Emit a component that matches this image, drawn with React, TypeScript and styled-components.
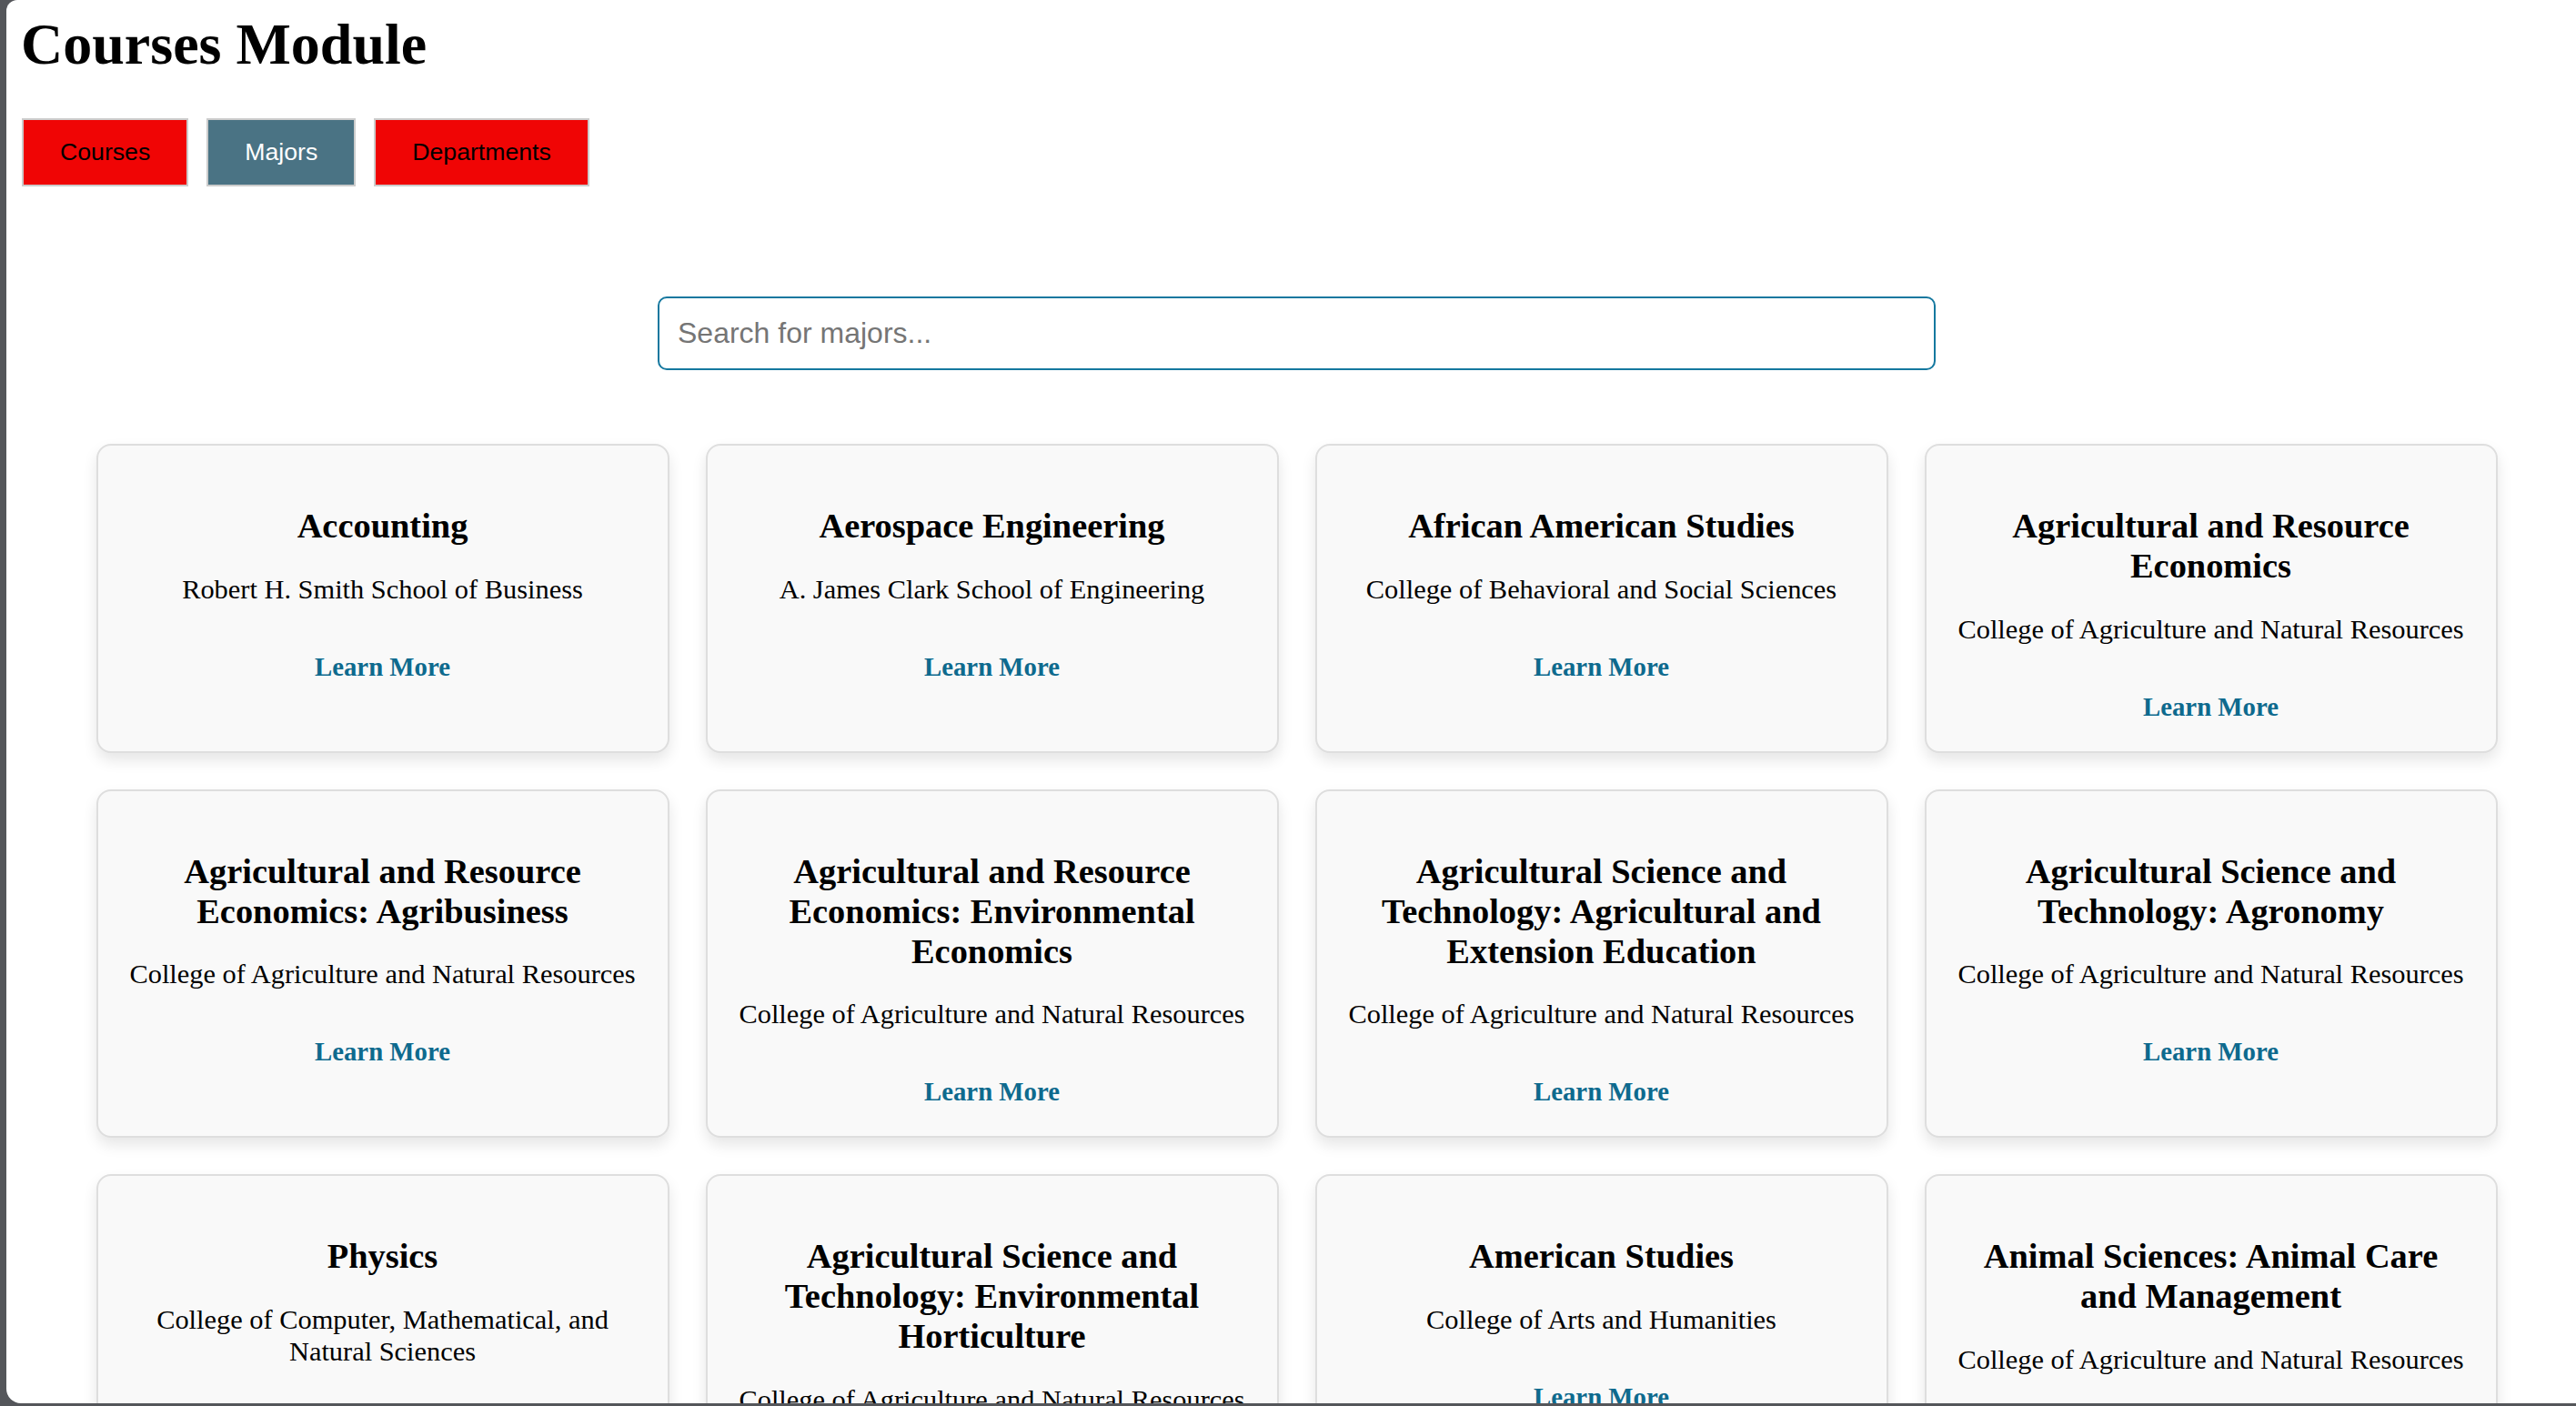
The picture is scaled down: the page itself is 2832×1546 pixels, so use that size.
import React from "react";
import styled, { createGlobalStyle } from "styled-components";

const GlobalStyle = createGlobalStyle`
  html, body {
    margin: 0;
    padding: 0;
    background: #54565a;
  }
  body {
    font-family: "Liberation Serif", "Times New Roman", serif;
  }
  #root {
    width: 2832px;
    height: 1546px;
    overflow: hidden;
  }
  * { box-sizing: border-box; }
`;

const Frame = styled.div`
  height: 1546px;
  padding: 0 0 3px 7px;
  display: flex;
`;

const Panel = styled.main`
  flex: 1;
  background: #ffffff;
  border-radius: 12px 0 0 16px;
  overflow: hidden;
  padding: 12px 4px 0 16px;
`;

const Title = styled.h1`
  margin: 0;
  font-size: 64px;
  font-weight: bold;
  line-height: normal;
  color: #000;
`;

const Tabs = styled.nav`
  display: flex;
  gap: 20px;
  margin-top: 44px;
  padding-left: 1px;
`;

const TabButton = styled.button<{ $active?: boolean }>`
  font-family: "Liberation Sans", Arial, sans-serif;
  font-size: 26.67px;
  line-height: normal;
  padding: 20px 40px;
  border: 2px solid #cccccc;
  border-radius: 0;
  background: ${(p) => (p.$active ? "#4a7384" : "#f00505")};
  color: ${(p) => (p.$active ? "#ffffff" : "#000000")};
  cursor: pointer;
`;

const SearchRow = styled.div`
  display: flex;
  justify-content: center;
  margin-top: 121px;
`;

const SearchInput = styled.input`
  width: 1405px;
  padding: 20px;
  font-family: "Liberation Sans", Arial, sans-serif;
  font-size: 32px;
  color: #000;
  border: 2px solid #15789f;
  border-radius: 10px;
  outline: none;
  background: #fff;
  &::placeholder {
    color: #757575;
  }
`;

const Grid = styled.section`
  display: grid;
  grid-template-columns: repeat(4, 630px);
  column-gap: 40px;
  row-gap: 40px;
  justify-content: center;
  margin-top: 81px;
`;

const Card = styled.article`
  background: #f9f9f9;
  border: 2px solid #dedede;
  border-radius: 16px;
  box-shadow: 0 8px 16px rgba(0, 0, 0, 0.1);
  padding: 30px 30px 31px;
  text-align: center;
  font-size: 32px;
`;

const CardTitle = styled.h3`
  margin: 36px 0 30.6px;
  font-size: 38.4px;
  font-weight: bold;
  line-height: normal;
  color: #000;
`;

const CardSub = styled.p`
  margin: 0 0 48px;
  font-size: 30.4px;
  line-height: normal;
  color: #000;
`;

const LinkRow = styled.div`
  font-size: 32px;
  line-height: normal;
`;

const LearnMore = styled.a`
  font-size: 28.8px;
  font-weight: bold;
  color: #0e6a8e;
  text-decoration: none;
`;

const majors: { name: string; college: string }[] = [
  { name: "Accounting", college: "Robert H. Smith School of Business" },
  { name: "Aerospace Engineering", college: "A. James Clark School of Engineering" },
  { name: "African American Studies", college: "College of Behavioral and Social Sciences" },
  { name: "Agricultural and Resource Economics", college: "College of Agriculture and Natural Resources" },
  { name: "Agricultural and Resource Economics: Agribusiness", college: "College of Agriculture and Natural Resources" },
  { name: "Agricultural and Resource Economics: Environmental Economics", college: "College of Agriculture and Natural Resources" },
  { name: "Agricultural Science and Technology: Agricultural and Extension Education", college: "College of Agriculture and Natural Resources" },
  { name: "Agricultural Science and Technology: Agronomy", college: "College of Agriculture and Natural Resources" },
  { name: "Physics", college: "College of Computer, Mathematical, and Natural Sciences" },
  { name: "Agricultural Science and Technology: Environmental Horticulture", college: "College of Agriculture and Natural Resources" },
  { name: "American Studies", college: "College of Arts and Humanities" },
  { name: "Animal Sciences: Animal Care and Management", college: "College of Agriculture and Natural Resources" },
];

export default function App() {
  return (
    <>
      <GlobalStyle />
      <Frame>
        <Panel>
          <Title>Courses Module</Title>
          <Tabs>
            <TabButton>Courses</TabButton>
            <TabButton $active>Majors</TabButton>
            <TabButton>Departments</TabButton>
          </Tabs>
          <SearchRow>
            <SearchInput type="text" placeholder="Search for majors..." autoFocus />
          </SearchRow>
          <Grid>
            {majors.map((m) => (
              <Card key={m.name}>
                <CardTitle>{m.name}</CardTitle>
                <CardSub>{m.college}</CardSub>
                <LinkRow>
                  <LearnMore href="#">Learn More</LearnMore>
                </LinkRow>
              </Card>
            ))}
          </Grid>
        </Panel>
      </Frame>
    </>
  );
}
